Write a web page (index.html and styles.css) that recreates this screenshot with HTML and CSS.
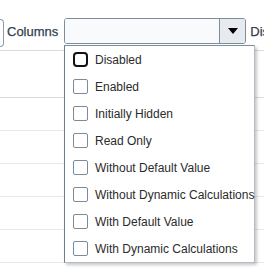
FILE: index.html
```html
<!DOCTYPE html>
<html>
<head>
<meta charset="utf-8">
<link rel="stylesheet" href="styles.css">
</head>
<body>
<div class="page">
  <div class="toolbar">
    <div class="btn-stub"></div>
    <span class="label">Columns</span>
    <div class="select">
      <div class="select-input"></div>
      <div class="select-btn"><span class="tri"></span></div>
    </div>
    <span class="label next">Display</span>
  </div>
  <div class="row first"></div>
  <div class="row"></div>
  <div class="row"></div>
  <div class="row"></div>
  <div class="row"></div>
  <div class="row"></div>

  <div class="menu">
    <div class="item"><span class="cb focused"></span><span>Disabled</span></div>
    <div class="item"><span class="cb"></span><span>Enabled</span></div>
    <div class="item"><span class="cb"></span><span>Initially Hidden</span></div>
    <div class="item"><span class="cb"></span><span>Read Only</span></div>
    <div class="item"><span class="cb"></span><span>Without Default Value</span></div>
    <div class="item"><span class="cb"></span><span>Without Dynamic Calculations</span></div>
    <div class="item"><span class="cb"></span><span>With Default Value</span></div>
    <div class="item"><span class="cb"></span><span>With Dynamic Calculations</span></div>
  </div>
</div>
</body>
</html>
```
FILE: styles.css
```css
html, body {
  margin: 0;
  padding: 0;
  background: #ffffff;
  overflow: hidden;
}
.page {
  position: relative;
  width: 264px;
  height: 276px;
  overflow: hidden;
  font-family: "Liberation Sans", Arial, sans-serif;
}
.toolbar {
  height: 51px;
  border-bottom: 1px solid #d5dde4;
  box-sizing: border-box;
  display: flex;
  align-items: flex-start;
  padding-top: 18px;
  white-space: nowrap;
}
.btn-stub {
  width: 3px;
  height: 26px;
  margin-top: 1px;
  border: 1px solid #8d9cab;
  border-left: none;
  border-radius: 0 4px 4px 0;
  flex: none;
}
.label {
  font-size: 13px;
  color: #34414f;
  -webkit-text-stroke: 0.25px #34414f;
  margin-left: 3px;
  line-height: 27px;
  flex: none;
}
.label.next {
  margin-left: 4px;
}
.select {
  margin-left: 6px;
  width: 182px;
  height: 26px;
  box-sizing: border-box;
  border: 1px solid #7c8d9e;
  border-radius: 3px;
  display: flex;
  flex: none;
  overflow: hidden;
}
.select-input {
  flex: 1;
  background: #f8fafc;
}
.select-btn {
  width: 25px;
  background: #e7ebef;
  border-left: 1px solid #7c8d9e;
  display: flex;
  align-items: center;
  justify-content: center;
}
.tri {
  width: 0;
  height: 0;
  border-left: 5px solid transparent;
  border-right: 5px solid transparent;
  border-top: 6px solid #000;
}
.row {
  height: 33px;
  border-bottom: 1px solid #e6e9ec;
  box-sizing: border-box;
}
.row.first {
  height: 47px;
  border-bottom-color: #d5dde4;
}
.menu {
  position: absolute;
  left: 64px;
  top: 45px;
  width: 191px;
  box-sizing: border-box;
  background: #ffffff;
  border: 1px solid #b3bcc5;
  border-left-color: #6c7f92;
  border-top: 1px solid #7c8d9e;
  box-shadow: 2px 2px 3px rgba(0,0,0,0.22);
}
.item {
  height: 27px;
  display: flex;
  align-items: center;
  padding-left: 8px;
  gap: 7px;
  font-size: 12px;
  color: #2b2b2b;
  white-space: nowrap;
}
.cb {
  width: 15px;
  height: 15px;
  box-sizing: border-box;
  border: 1px solid #7b8b9a;
  border-radius: 2px;
  flex: none;
}
.cb.focused {
  border: 2px solid #111;
  border-radius: 4px;
}
```
